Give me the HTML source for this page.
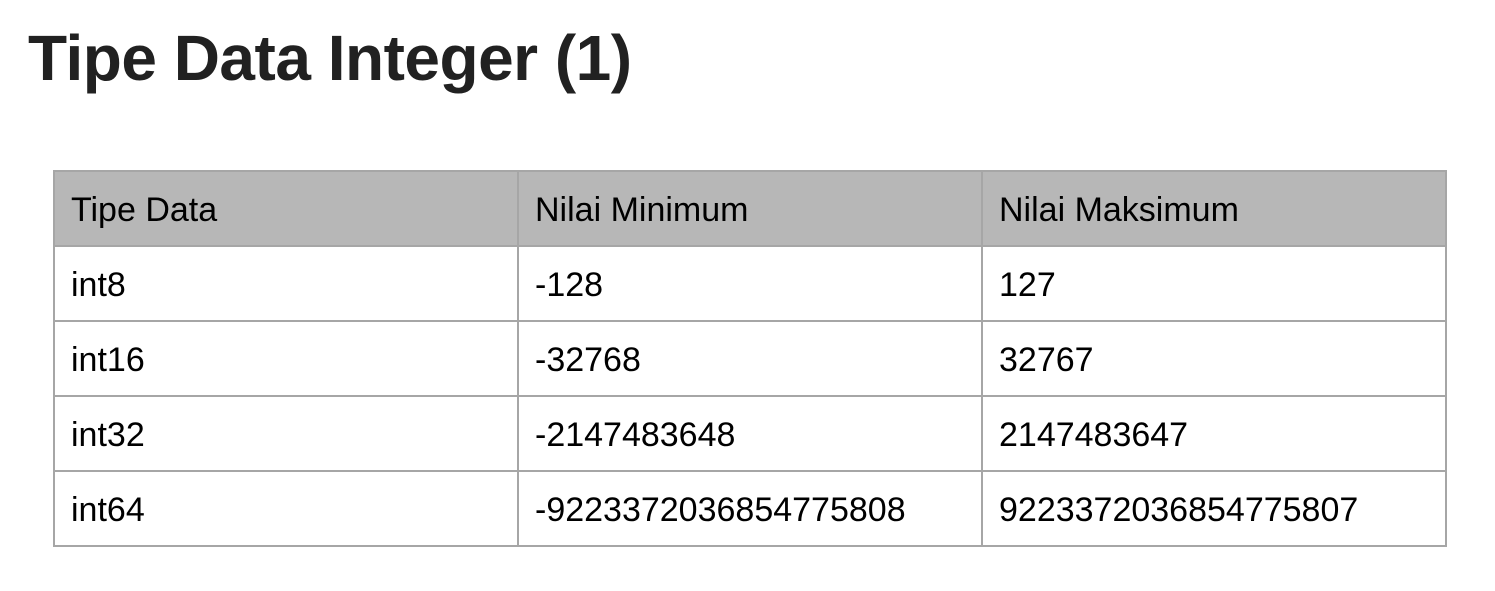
<!DOCTYPE html>
<html><head><meta charset="utf-8"><style>
body{margin:0;background:#fff;width:1495px;height:591px;overflow:hidden;font-family:"Liberation Sans",sans-serif}
h1{position:absolute;left:28px;top:18px;margin:0;font-size:64px;font-weight:bold;color:#212121;line-height:80px;white-space:nowrap;letter-spacing:-0.5px}
table{position:absolute;left:53px;top:170px;border-collapse:collapse;table-layout:fixed}
td{border:2px solid #a6a6a6;padding:3px 0 0 16px;font-size:34px;color:#000;vertical-align:middle;box-sizing:border-box;width:464px;height:75px}
tr:first-child td{background:#b7b7b7}
</style></head><body>
<h1>Tipe Data Integer (1)</h1>
<table>
<tr><td>Tipe Data</td><td>Nilai Minimum</td><td>Nilai Maksimum</td></tr>
<tr><td>int8</td><td>-128</td><td>127</td></tr>
<tr><td>int16</td><td>-32768</td><td>32767</td></tr>
<tr><td>int32</td><td>-2147483648</td><td>2147483647</td></tr>
<tr><td>int64</td><td>-9223372036854775808</td><td>9223372036854775807</td></tr>
</table>
</body></html>
